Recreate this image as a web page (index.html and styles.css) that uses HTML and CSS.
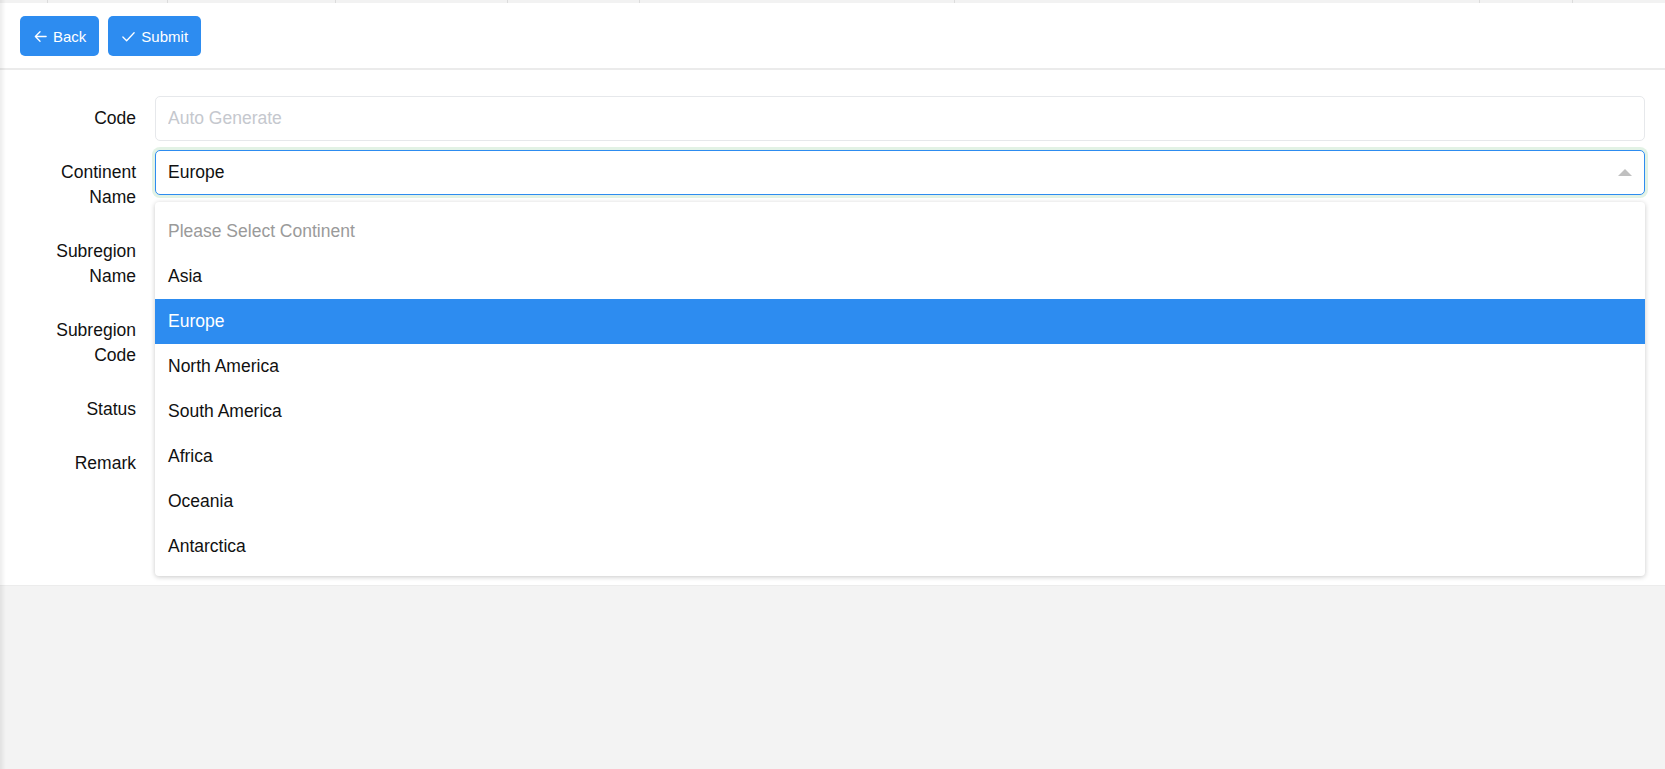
FILE: index.html
```html
<!DOCTYPE html>
<html lang="en">
<head>
<meta charset="utf-8">
<title>Subregion</title>
<link rel="stylesheet" href="styles.css">
</head>
<body>
<div class="edge-shadow"></div>
<div class="tabstrip">
  <span class="tick t1"></span><span class="tick t2"></span><span class="tick t3"></span><span class="tick t4"></span><span class="tick t5"></span><span class="tick t6"></span><span class="tick t7"></span><span class="tick t8"></span>
</div>
<header class="toolbar">
  <button class="btn" type="button">
    <svg class="btn-icon" viewBox="0 0 16 16" width="15" height="15"><path d="M14 8H2.5M7.5 3L2.5 8l5 5" fill="none" stroke="#fff" stroke-width="1.4" stroke-linecap="round" stroke-linejoin="round"/></svg>
    <span>Back</span>
  </button>
  <button class="btn" type="button">
    <svg class="btn-icon" viewBox="0 0 16 16" width="15" height="15"><path d="M2 8.5l4 4 8-8.5" fill="none" stroke="#fff" stroke-width="1.4" stroke-linecap="round" stroke-linejoin="round"/></svg>
    <span>Submit</span>
  </button>
</header>
<main class="panel">
  <form class="form">
    <div class="form-item">
      <label class="form-label">Code</label>
      <div class="form-control">
        <input class="input" type="text" placeholder="Auto Generate">
      </div>
    </div>
    <div class="form-item">
      <label class="form-label">Continent Name</label>
      <div class="form-control">
        <div class="select focused">
          <span class="select-value">Europe</span>
          <span class="select-arrow"></span>
          <ul class="dropdown">
            <li class="option placeholder">Please Select Continent</li>
            <li class="option">Asia</li>
            <li class="option selected">Europe</li>
            <li class="option">North America</li>
            <li class="option">South America</li>
            <li class="option">Africa</li>
            <li class="option">Oceania</li>
            <li class="option">Antarctica</li>
          </ul>
        </div>
      </div>
    </div>
    <div class="form-item">
      <label class="form-label">Subregion Name</label>
      <div class="form-control">
        <input class="input" type="text">
      </div>
    </div>
    <div class="form-item">
      <label class="form-label">Subregion Code</label>
      <div class="form-control">
        <input class="input" type="text">
      </div>
    </div>
    <div class="form-item">
      <label class="form-label">Status</label>
      <div class="form-control">
        <input class="input" type="text">
      </div>
    </div>
    <div class="form-item">
      <label class="form-label">Remark</label>
      <div class="form-control">
        <textarea class="textarea"></textarea>
      </div>
    </div>
  </form>
</main>
</body>
</html>
```
FILE: styles.css
```css
* { box-sizing: border-box; }
html, body { margin: 0; padding: 0; }
body {
  background: #f3f3f3;
  font-family: "Liberation Sans", Arial, sans-serif;
  color: #1a1a1a;
  min-height: 769px;
}
.edge-shadow {
  position: fixed;
  left: 0; top: 0; bottom: 0;
  width: 6px;
  background: linear-gradient(to right, rgba(0,0,0,0.07), rgba(0,0,0,0));
  z-index: 5;
  pointer-events: none;
}
.tabstrip {
  position: relative;
  height: 3px;
  background: #f2f2f2;
}
.tick {
  position: absolute;
  top: 0;
  width: 1px;
  height: 3px;
  background: #dcdcdc;
}
.t1 { left: 47px; } .t2 { left: 167px; } .t3 { left: 335px; } .t4 { left: 507px; }
.t5 { left: 639px; } .t6 { left: 954px; } .t7 { left: 1479px; } .t8 { left: 1572px; }
.toolbar {
  background: #fff;
  height: 67px;
  padding: 13px 20px 0;
  display: flex;
  gap: 9px;
  border-bottom: 2px solid #ebebeb;
}
.btn {
  height: 40px;
  display: inline-flex;
  align-items: center;
  gap: 5px;
  padding: 0 13px;
  border: none;
  border-radius: 5px;
  background: #2d8cf0;
  color: #fff;
  font-family: "Liberation Sans", Arial, sans-serif;
  font-size: 15px;
  cursor: pointer;
}
.btn-icon { display: block; }
.panel {
  background: #fff;
  border-bottom: 1px solid #ececec;
  padding: 26px 20px 55px 35px;
}
.form-item {
  display: flex;
  align-items: flex-start;
  margin-bottom: 9px;
}
.form-label {
  width: 120px;
  flex: none;
  padding: 10px 19px 10px 0;
  text-align: right;
  font-size: 17.5px;
  line-height: 25px;
  color: #111;
}
.form-control {
  flex: 1;
  position: relative;
}
.input {
  display: block;
  width: 100%;
  height: 45px;
  border: 1px solid #e6e8eb;
  border-radius: 5px;
  padding: 0 12px;
  font-family: "Liberation Sans", Arial, sans-serif;
  font-size: 17.5px;
  color: #1a1a1a;
  background: #fff;
  outline: none;
}
.input::placeholder { color: #c5c8ce; }
.textarea {
  display: block;
  width: 100%;
  height: 80px;
  border: 1px solid #e6e8eb;
  border-radius: 5px;
  padding: 8px 12px;
  font-family: "Liberation Sans", Arial, sans-serif;
  font-size: 17.5px;
  resize: none;
}
.select {
  position: relative;
  height: 45px;
  border: 1px solid #2d8cf0;
  border-radius: 5px;
  padding: 0 12px;
  display: flex;
  align-items: center;
  font-size: 17.5px;
  background: #fff;
}
.select.focused { box-shadow: 0 0 0 3px #e2f2e5; }
.select-value { color: #111; }
.select-arrow {
  position: absolute;
  right: 12px;
  top: 18px;
  width: 0; height: 0;
  border-left: 7px solid transparent;
  border-right: 7px solid transparent;
  border-bottom: 7px solid #c0c0c0;
}
.dropdown {
  position: absolute;
  left: -1px;
  right: -1px;
  top: 51px;
  margin: 0;
  padding: 7px 0;
  list-style: none;
  background: #fff;
  border-radius: 4px;
  box-shadow: 0 1px 5px rgba(0,0,0,0.22);
  z-index: 10;
}
.option {
  height: 45px;
  line-height: 45px;
  padding: 0 13px;
  font-size: 17.5px;
  color: #111;
  white-space: nowrap;
}
.option.placeholder { color: #9a9a9a; }
.option.selected { background: #2d8cf0; color: #fff; }
```
